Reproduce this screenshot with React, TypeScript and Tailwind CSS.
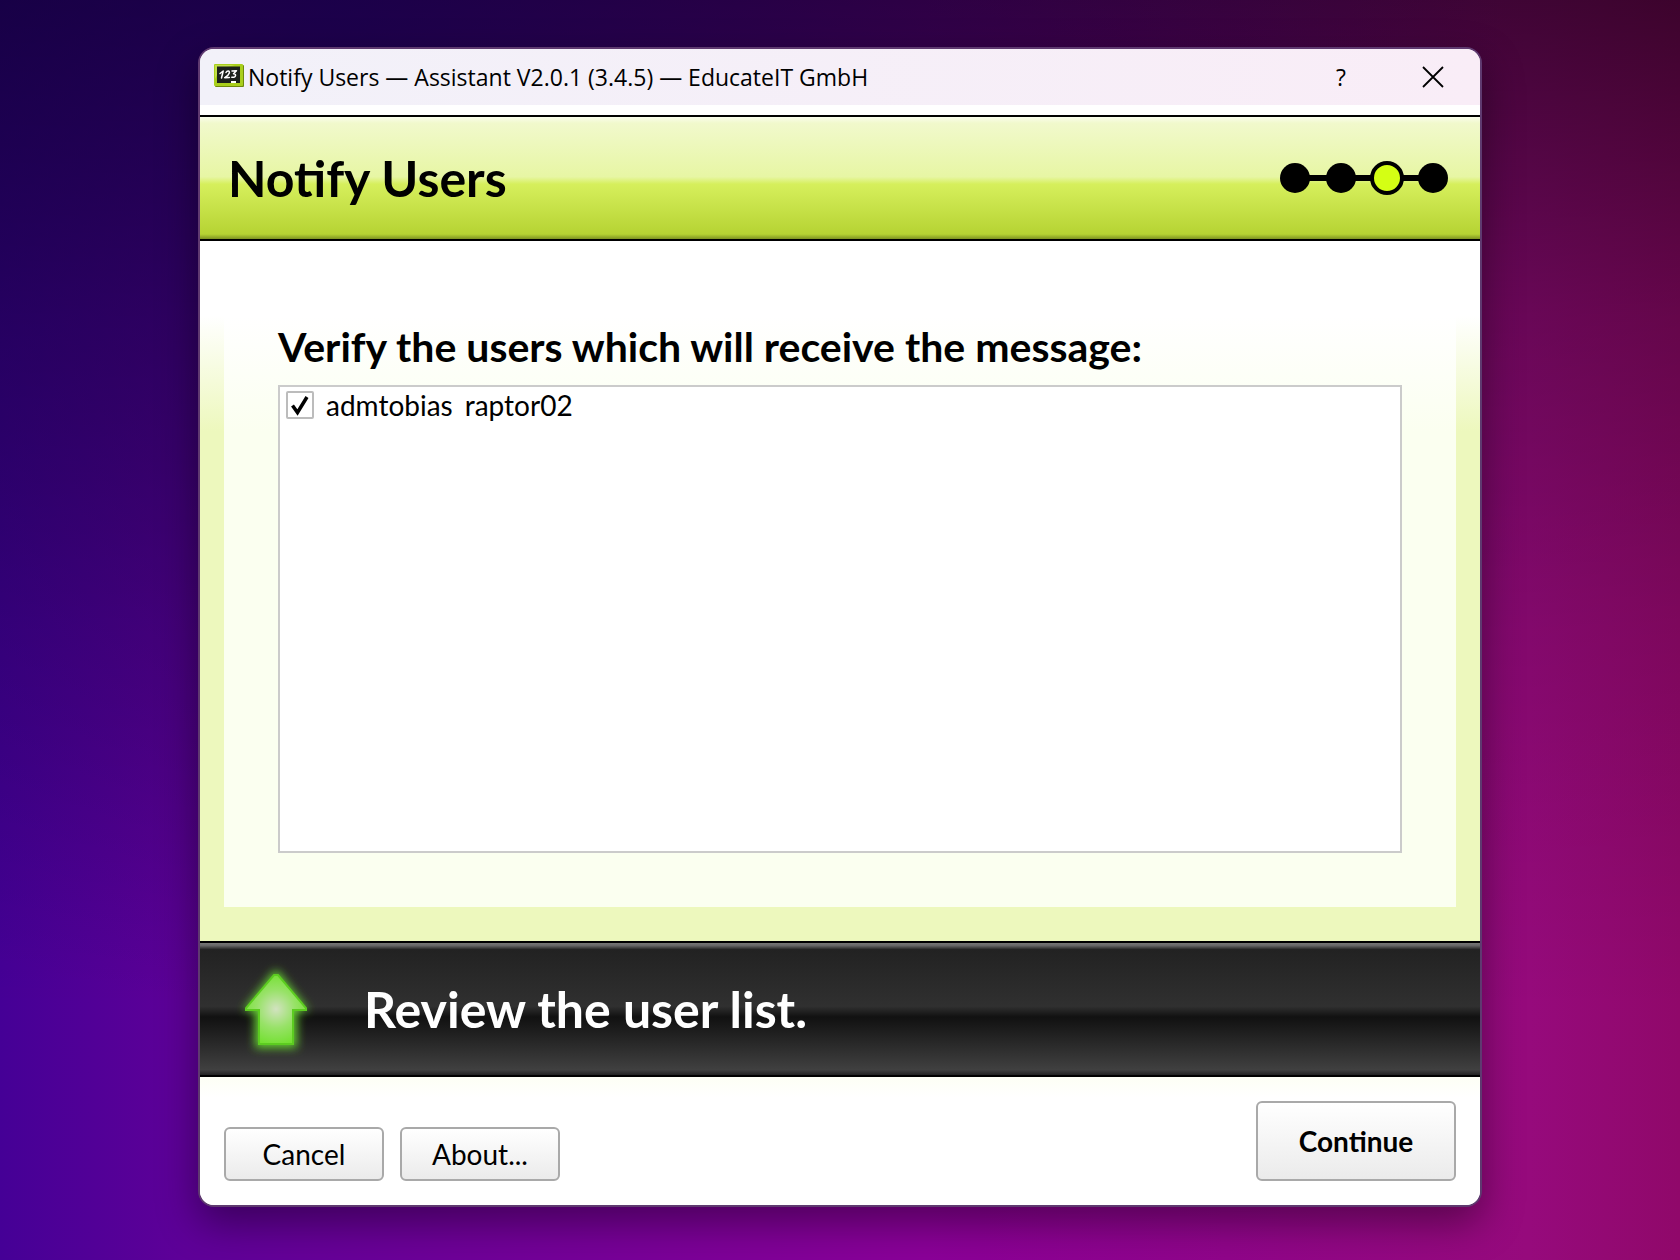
import { useState } from "react";

interface User {
  id: string;
  name: string;
  host: string;
}

const users: User[] = [{ id: "u1", name: "admtobias", host: "raptor02" }];

const steps = [1, 2, 3, 4];

function AppIcon() {
  return (
    <svg width="30" height="26" viewBox="0 0 30 26" aria-hidden="true">
      <rect x="1" y="1" width="29" height="22" rx="1" fill="#6f8a0c" />
      <rect width="29" height="22" rx="1" fill="#a9cf1c" />
      <path d="M1 1h20l-8 2H3v8l-2 4z" fill="#c3e04a" />
      <rect x="3" y="2.500" width="23" height="16.500" fill="#1c211c" />
      <g fill="none" stroke="#fff" strokeWidth="1.5" strokeLinecap="round" strokeLinejoin="round">
        <path d="M6 9.500l3.200-2.500-1.700 7" />
        <path d="M12 8.500c1.200-2.200 4-1.800 3.300.500s-2.800 3.500-4.600 4.700l4.700-.300" />
        <path d="M18 7l4.500-.300-3 3c3-.200 3 4-1.700 3.600" />
      </g>
      <path d="M17 17h5v2h-5z" fill="#fff" />
    </svg>
  );
}

function StepIndicator({ current }: { current: number }) {
  return (
    <svg width="170" height="36" viewBox="0 0 170 36" role="img" aria-label={`Step ${current} of ${steps.length}`}>
      <path d="M16 18H154" stroke="#000" strokeWidth="6" />
      {steps.map((step, i) =>
        step === current ? (
          <circle key={step} cx={16 + i * 46} cy="18" r="15" fill="#d4ff14" stroke="#000" strokeWidth="4" />
        ) : (
          <circle key={step} cx={16 + i * 46} cy="18" r="15" />
        )
      )}
    </svg>
  );
}

function ArrowIcon() {
  return (
    <svg width="96" height="104" viewBox="0 0 96 104" aria-hidden="true">
      <defs>
        <radialGradient id="arrowFill" gradientUnits="userSpaceOnUse" cx="48" cy="52" r="38">
          <stop offset="0" stopColor="#d2e2c0" />
          <stop offset="0.5" stopColor="#98e268" />
          <stop offset="1" stopColor="#70e02c" />
        </radialGradient>
        <filter id="arrowGlow" x="-50%" y="-50%" width="200%" height="200%">
          <feGaussianBlur stdDeviation="5" />
        </filter>
      </defs>
      <path d="M46 14H50L81 54H69V91H27V54H15Z" fill="#66d030" filter="url(#arrowGlow)" />
      <path d="M46 18H50L78 51V53H65V87H31V53H18V51Z" fill="url(#arrowFill)" stroke="#5ccc20" strokeWidth="2" />
    </svg>
  );
}

function UserRow({ user }: { user: User }) {
  const [checked, setChecked] = useState(true);

  return (
    <label className="flex items-center gap-3 text-[28px] leading-8">
      <span className="grid size-7 shrink-0">
        <input
          type="checkbox"
          checked={checked}
          onChange={(e) => setChecked(e.target.checked)}
          className="col-start-1 row-start-1 size-7 appearance-none rounded-xs border-2 border-[#bcbcbc] bg-white"
        />
        {checked && (
          <svg className="pointer-events-none col-start-1 row-start-1" width="28" height="28" viewBox="0 0 28 28" fill="none">
            <path d="M6.500 14.500l5 7L21 6" stroke="#000" strokeWidth="3.500" />
          </svg>
        )}
      </span>
      <span>{user.name}</span>
      <span>{user.host}</span>
    </label>
  );
}

function App() {
  return (
    <div className="flex min-h-screen flex-col items-center bg-[radial-gradient(ellipse_70%_80%_at_20%_0%,rgba(16,0,80,0.6),transparent),linear-gradient(rgba(0,0,0,0.58),rgba(0,0,0,0.3)_25%,rgba(0,0,0,0.13)_50%,transparent_80%),linear-gradient(90deg,#450096_0%,#5e0098_11%,#8a0098_55%,#960a7c_91%,#90086a_100%)] px-6 pt-[47px] pb-[53px] font-['Lato','Noto_Sans',sans-serif] text-black">
      <div className="flex w-full max-w-[1284px] flex-1 flex-col overflow-hidden rounded-2xl border-2 border-[#5f3a70] bg-white shadow-[0_16px_40px_rgba(0,0,0,0.4)]">
        {/* Title bar */}
        <div className="flex h-14 items-center bg-linear-to-r from-[#f2f1f9] to-[#f9edf7] pr-[29px] pl-3.5 font-['Open_Sans','Noto_Sans',sans-serif]">
          <AppIcon />
          <span className="ml-1 flex-1 text-[23px]">Notify Users — Assistant V2.0.1 (3.4.5) — EducateIT GmbH</span>
          <button type="button" aria-label="Help" className="w-9 text-[23px]">?</button>
          <button type="button" aria-label="Close" className="ml-14 flex w-9 justify-center">
            <svg width="22" height="22" viewBox="0 0 22 22" fill="none">
              <path d="M1 1L21 21M21 1L1 21" stroke="#000" strokeWidth="1.800" />
            </svg>
          </button>
        </div>

        {/* Header */}
        <header className="mt-2.5 flex h-[126px] items-center justify-between border-y-2 border-black bg-[linear-gradient(#fafdec_0%,#f1f9cc_5%,#e7f6a4_49%,#d6ef5c_55%,#b6d333_96%,#7e9322_100%)] pr-[31px] pl-7">
          <h1 className="text-[50px] font-bold">Notify Users</h1>
          <StepIndicator current={3} />
        </header>

        {/* Content */}
        <main className="flex flex-1 flex-col bg-[linear-gradient(#fff_75px,#edf8bd_190px)] px-6 pb-[34px]">
          <section className="flex flex-1 flex-col bg-[linear-gradient(#fff_75px,#fbfff0_190px)] px-[54px] pt-[78px] pb-[54px]">
            <h2 className="mb-2.5 text-[41px] leading-14 font-bold">Verify the users which will receive the message:</h2>
            <div className="flex-1 border-2 border-[#cbcbcb] bg-white px-1.5 py-0.5">
              {users.map((user) => (
                <UserRow key={user.id} user={user} />
              ))}
            </div>
          </section>
        </main>

        {/* Instruction */}
        <div className="flex h-[136px] items-center gap-10 border-y-2 border-black bg-[linear-gradient(#777_0%,#666_2%,#222_5%,#303030_48%,#111_56%,#404040_96%,#222_100%)] pl-7 text-white">
          <ArrowIcon />
          <p className="text-[50px] font-bold">Review the user list.</p>
        </div>

        {/* Buttons */}
        <footer className="flex items-end gap-4 bg-[linear-gradient(#fdfff5,#fff_20px)] px-6 pt-6 pb-6 text-[28px]">
          <button type="button" className="h-[54px] w-40 rounded-md border-2 border-[#a9a9a9] bg-linear-to-b from-white to-[#ebebeb]">Cancel</button>
          <button type="button" className="h-[54px] w-40 rounded-md border-2 border-[#a9a9a9] bg-linear-to-b from-white to-[#ebebeb]">About...</button>
          <button type="button" className="ml-auto h-20 w-[200px] rounded-md border-2 border-[#a9a9a9] bg-linear-to-b from-white to-[#ebebeb] font-bold">Continue</button>
        </footer>
      </div>
    </div>
  );
}

export default App;
